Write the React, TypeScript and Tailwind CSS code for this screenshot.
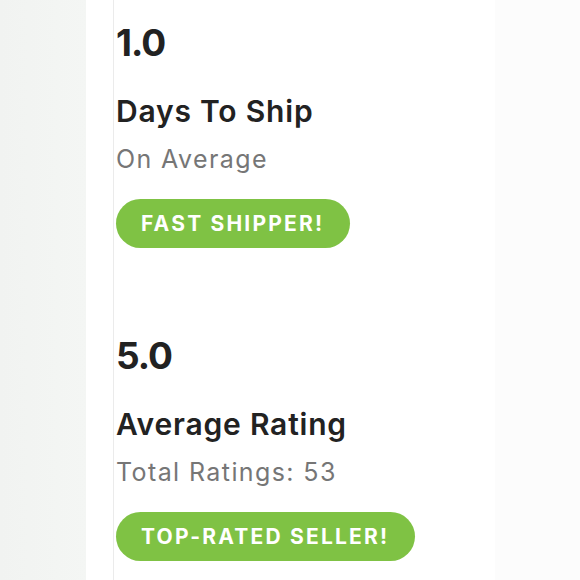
import React from 'react';

const Stat = ({ value, label, sub, badge }: { value: string; label: string; sub: string; badge: string }) => (
  <div className="flex flex-col items-start">
    <div className="text-[37px] leading-[40px] font-bold text-[#222222] tracking-[-1px]">{value}</div>
    <div className="mt-[31px] text-[30px] leading-[34px] font-semibold text-[#222222] tracking-[0.8px]">{label}</div>
    <div className="mt-[16px] text-[25px] leading-[30px] text-[#767676] tracking-[1.4px]">{sub}</div>
    <div className="mt-[25px] h-[49px] pl-[25px] pr-[26px] rounded-full bg-[#7fc244] flex items-center text-white text-[21px] font-bold tracking-[2.2px]">
      {badge}
    </div>
  </div>
);

export default function App() {
  return (
    <div
      className="w-[580px] h-[580px] overflow-hidden flex bg-[#fcfcfc]"
      style={{ fontFamily: 'Inter, "Open Sans", sans-serif' }}
    >
      <div className="w-[86px] shrink-0 bg-gradient-to-r from-[#f1f3f1] to-[#f4f6f4]" />
      <div className="w-[409px] shrink-0 bg-white pl-[27px]">
        <div className="h-full border-l border-[#ebebeb] pl-[2px] pt-[23px] flex flex-col gap-[88px]">
          <Stat value="1.0" label="Days To Ship" sub="On Average" badge="FAST SHIPPER!" />
          <Stat value="5.0" label="Average Rating" sub="Total Ratings: 53" badge="TOP-RATED SELLER!" />
        </div>
      </div>
      <div className="flex-1" />
    </div>
  );
}
